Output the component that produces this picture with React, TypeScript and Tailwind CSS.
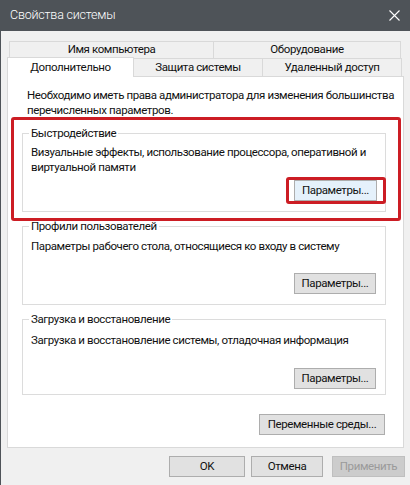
import clsx from 'clsx';
import type { ReactNode } from 'react';

function Btn({ children, className, disabled }: { children: ReactNode; className?: string; disabled?: boolean }) {
  return (
    <button
      className={clsx(
        'flex h-[21px] items-center justify-center whitespace-nowrap border text-[11.5px] leading-none tracking-[-0.4px]',
        disabled ? 'border-[#bfbfbf] bg-[#cccccc] text-[#9a9a9a]' : 'border-[#adadad] bg-[#e1e1e1] text-[#111]',
        className,
      )}
    >
      {children}
    </button>
  );
}

function Group({ title, children, className }: { title: string; children: ReactNode; className?: string }) {
  return (
    <fieldset className={clsx('ml-[14px] w-[364px] border border-[#dcdcdc] px-0', className)}>
      <legend className="ml-[6px] px-[2px] leading-[15px]">{title}</legend>
      {children}
    </fieldset>
  );
}

export default function App() {
  return (
    <div className="relative h-[485px] w-[410px] overflow-hidden whitespace-nowrap border-l border-[#4e5358] bg-[#f0f0f0] font-['Roboto',sans-serif] text-[11.5px] tracking-[-0.4px] text-[#111]">
      {/* заголовок окна */}
      <div className="flex h-[31px] items-center justify-between bg-[#4e5358] pl-[9px] pr-[9px]">
        <span className="text-[12.5px] font-light tracking-[-0.2px] text-white">Свойства системы</span>
        <svg width="11" height="11" viewBox="0 0 11 11" className="mr-[1px]">
          <path d="M0.5 0.5L10.5 10.5M10.5 0.5L0.5 10.5" stroke="#fff" strokeWidth="1.1" />
        </svg>
      </div>

      <div className="pl-[6px] pt-[10px]">
        {/* вкладки */}
        <div className="ml-[2px] flex h-[17px]">
          <div className="flex w-[204px] items-center justify-center border-l border-t border-[#d9d9d9]">Имя компьютера</div>
          <div className="flex w-[188px] items-center justify-center border-x border-t border-[#d9d9d9]">Оборудование</div>
        </div>
        <div className="relative z-10 flex h-[18px] items-end">
          <div className="-mb-px flex h-[20px] w-[127px] items-center justify-center border-x border-t border-[#d9d9d9] bg-white">
            Дополнительно
          </div>
          <div className="flex h-[18px] w-[129px] items-center justify-center border-r border-t border-[#d9d9d9]">Защита системы</div>
          <div className="flex h-[18px] w-[139px] items-center justify-center border-r border-t border-[#d9d9d9]">Удаленный доступ</div>
        </div>

        {/* содержимое вкладки */}
        <div className="flex h-[372px] w-[397px] flex-col border border-[#d9d9d9] bg-white">
          <p className="ml-[19px] mt-[11px] leading-[15px]">
            Необходимо иметь права администратора для изменения большинства
            <br />
            перечисленных параметров.
          </p>

          <Group title="Быстродействие" className="mt-[8px]">
            <p className="ml-[8px] pt-[4px] leading-[15px]">
              Визуальные эффекты, использование процессора, оперативной и
              <br />
              виртуальной памяти
            </p>
            <div className="mb-[10px] mr-[8px] mt-[5px] flex justify-end">
              <Btn className="w-[83px] border-[#0078d7] bg-[#e5f1fb]">Параметры...</Btn>
            </div>
          </Group>

          <Group title="Профили пользователей" className="mt-[7px]">
            <p className="ml-[8px] pt-[5px] leading-[15px]">Параметры рабочего стола, относящиеся ко входу в систему</p>
            <div className="mb-[10px] mr-[9px] mt-[19px] flex justify-end">
              <Btn className="w-[82px]">Параметры...</Btn>
            </div>
          </Group>

          <Group title="Загрузка и восстановление" className="mt-[7px]">
            <p className="ml-[8px] pt-[6px] leading-[15px]">Загрузка и восстановление системы, отладочная информация</p>
            <div className="mb-[5px] mr-[9px] mt-[20px] flex justify-end">
              <Btn className="w-[82px]">Параметры...</Btn>
            </div>
          </Group>

          <div className="mr-[18px] mt-[19px] flex justify-end">
            <Btn className="w-[126px]">Переменные среды...</Btn>
          </div>
        </div>

        {/* кнопки диалога */}
        <div className="mt-[8px] flex justify-end gap-[6px] pr-[5px]">
          <Btn className="w-[76px]">OK</Btn>
          <Btn className="w-[72px]">Отмена</Btn>
          <Btn disabled className="ml-[3px] w-[73px]">
            Применить
          </Btn>
        </div>
      </div>

      {/* красные рамки поверх окна */}
      <div className="pointer-events-none absolute left-[10px] top-[117px] h-[104px] w-[390px] rounded-[3px] border-[3px] border-[#cc1d24]" />
      <div className="pointer-events-none absolute left-[285px] top-[177px] h-[27px] w-[100px] rounded-[3px] border-[3px] border-[#cc1d24]" />
    </div>
  );
}
